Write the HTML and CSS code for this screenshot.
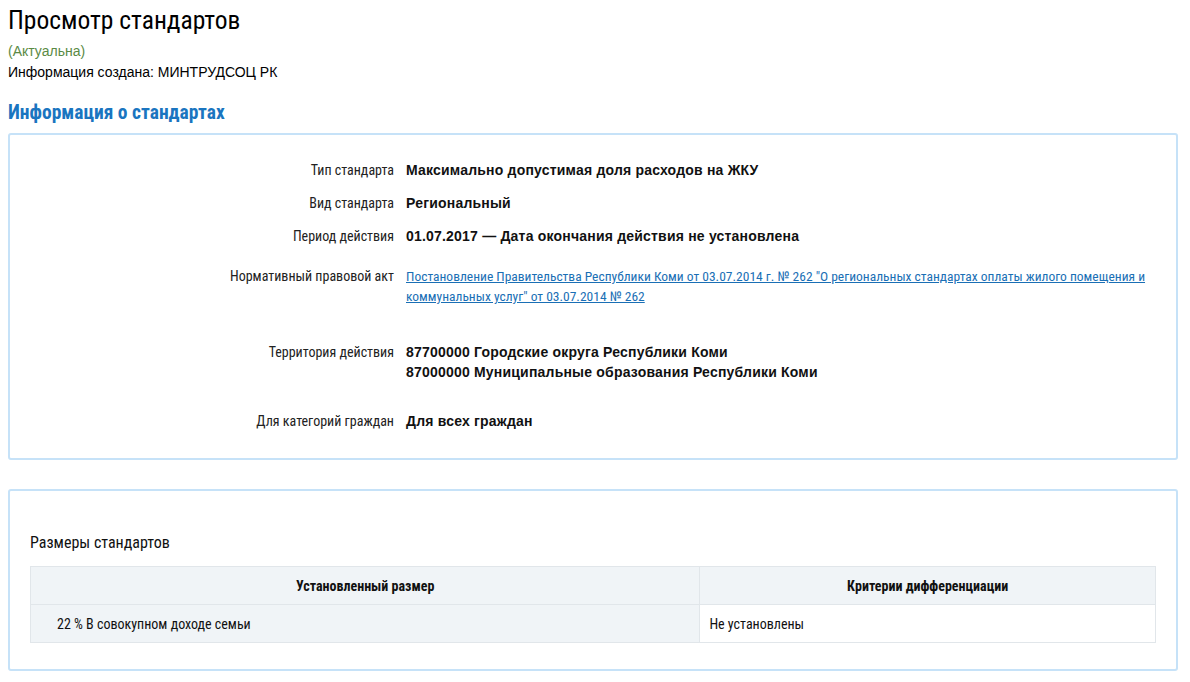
FILE: index.html
```html
<!DOCTYPE html>
<html lang="ru">
<head>
  <meta charset="UTF-8">
  <meta name="viewport" content="width=device-width, initial-scale=1.0">
  <title>Просмотр стандартов</title>
  <link rel="stylesheet" href="styles.css">
</head>
<body>

  <div class="page">
    <h1 class="page-title">Просмотр стандартов</h1>
    <div class="status">(Актуальна)</div>
    <div class="author">Информация создана: МИНТРУДСОЦ РК</div>

    <h2 class="section-title">Информация о стандартах</h2>

    <!-- Основные сведения -->
    <div class="panel panel-info">
      <div class="field">
        <div class="field-label">Тип стандарта</div>
        <div class="field-value">Максимально допустимая доля расходов на ЖКУ</div>
      </div>
      <div class="field">
        <div class="field-label">Вид стандарта</div>
        <div class="field-value">Региональный</div>
      </div>
      <div class="field field-wide">
        <div class="field-label">Период действия</div>
        <div class="field-value">01.07.2017 — Дата окончания действия не установлена</div>
      </div>
      <div class="field field-wider">
        <div class="field-label">Нормативный правовой акт</div>
        <div class="field-value">
          <a class="act-link" href="#">Постановление Правительства Республики Коми от 03.07.2014 г. № 262 "О региональных стандартах оплаты жилого помещения и коммунальных услуг" от 03.07.2014 № 262</a>
        </div>
      </div>
      <div class="field field-territory">
        <div class="field-label">Территория действия</div>
        <div class="field-value">
          87700000 Городские округа Республики Коми<br>
          87000000 Муниципальные образования Республики Коми
        </div>
      </div>
      <div class="field field-last">
        <div class="field-label">Для категорий граждан</div>
        <div class="field-value">Для всех граждан</div>
      </div>
    </div>

    <!-- Размеры стандартов -->
    <div class="panel panel-sizes">
      <h3 class="sizes-title">Размеры стандартов</h3>
      <table class="sizes-table">
        <thead>
          <tr>
            <th class="col-size">Установленный размер</th>
            <th>Критерии дифференциации</th>
          </tr>
        </thead>
        <tbody>
          <tr>
            <td class="cell-size">22 % В совокупном доходе семьи</td>
            <td class="cell-criteria">Не установлены</td>
          </tr>
        </tbody>
      </table>
    </div>
  </div>

</body>
</html>
```

FILE: styles.css
```css
/* Общие стили */
body {
  margin: 0;
  padding: 0 8px;
  background-color: #fff;
  color: #000;
  font-family: 'Liberation Sans', Arial, sans-serif;
  font-size: 14px;
}

.page {
  max-width: 1170px;
}

/* Узкий шрифт для заголовков и подписей */
.page-title,
.section-title,
.field-label,
.act-link,
.sizes-title,
.sizes-table {
  font-family: Roboto, sans-serif;
  font-stretch: 75%;
}

.page-title {
  margin: 0;
  padding-top: 5px;
  font-size: 25.5px;
  font-weight: normal;
  line-height: 30px;
  color: #000;
}

.status {
  margin-top: 7px;
  line-height: 18px;
  color: #5b8a45;
}

.author {
  margin-top: 3px;
  line-height: 18px;
}

.section-title {
  margin: 20px 0 8px;
  font-size: 19.5px;
  font-weight: bold;
  line-height: 24px;
  color: #1a75c0;
}

/* Панели */
.panel {
  border: 2px solid #c6e2f8;
  border-radius: 3px;
  background-color: #fff;
}

.panel-info {
  padding: 25px 20px 27px 10px;
}

.field {
  display: flex;
  gap: 12px;
  line-height: 20px;
  margin-bottom: 13px;
}

.field-wide {
  margin-bottom: 20px;
}

.field-wider {
  margin-bottom: 36px;
}

.field-territory {
  margin-bottom: 29px;
}

.field-last {
  margin-bottom: 0;
}

.field-label {
  flex: 0 0 374px;
  text-align: right;
  font-size: 14px;
  color: #222;
}

.field-value {
  flex: 1;
  font-weight: bold;
  font-size: 14px;
  letter-spacing: 0.2px;
  color: #111;
}

.act-link {
  font-weight: normal;
  font-size: 13.5px;
  letter-spacing: 0;
  color: #1a6fb5;
  text-decoration: underline;
}

/* Размеры стандартов */
.panel-sizes {
  margin-top: 29px;
  padding: 42px 20px 26px;
}

.sizes-title {
  margin: 0 0 13px;
  font-size: 16px;
  font-weight: normal;
  line-height: 20px;
  color: #111;
}

.sizes-table {
  width: 100%;
  border-collapse: collapse;
  font-size: 14px;
  color: #111;
}

.sizes-table th,
.sizes-table td {
  height: 37px;
  border: 1px solid #e1e6ea;
  padding: 0 9px;
}

.sizes-table th {
  background-color: #f0f4f7;
  font-weight: bold;
  text-align: center;
}

.col-size {
  width: 59.5%;
}

.sizes-table .cell-size {
  background-color: #f0f4f7;
  padding-left: 26px;
}

.cell-criteria {
  background-color: #fff;
}
```
